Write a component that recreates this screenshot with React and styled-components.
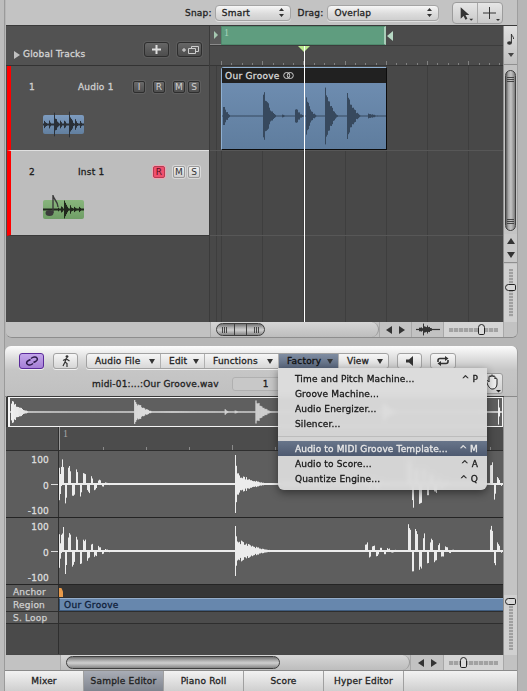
import React from "react";
import styled, { createGlobalStyle } from "styled-components";

const GlobalStyle = createGlobalStyle`
  html, body { margin: 0; padding: 0; background: #b6b6b6; }
  * { box-sizing: border-box; }
  body { font-family: "DejaVu Sans", "Liberation Sans", sans-serif; }
`;

// small seeded random so the waveforms stay the same on every load
const seeded = (seed) => {
  let s = seed;
  return () => {
    s = (s * 16807) % 2147483647;
    return s / 2147483647;
  };
};

// hits: [x, amplitude, decay length, ringing?]
const wavePath = (width, cy, hits, seed, floor = 0.5) => {
  const rnd = seeded(seed);
  let d = "";
  for (let x = 0; x < width; x++) {
    let up = floor;
    let down = floor;
    hits.forEach(([hx, amp, len, ring]) => {
      if (x < hx || x > hx + len) return;
      const t = (x - hx) / len;
      const j = 0.6 + rnd() * 0.4;
      if (ring) {
        const env = amp * Math.pow(1 - t, 1.4);
        const phase = Math.sin((x - hx) * 0.85);
        if (phase > 0.45) up = Math.max(up, env * j);
        if (phase < -0.45) down = Math.max(down, env * j);
      } else {
        const env = amp * Math.pow(1 - t, 2.2);
        up = Math.max(up, env * j);
        down = Math.max(down, env * j);
      }
    });
    d += `M${x + 0.5} ${(cy - up).toFixed(1)}V${(cy + down).toFixed(1)}`;
  }
  return d;
};

const Wave = ({ width, height, hits, seed, color = "#ececec", floor, className }) => (
  <svg className={className} width={width} height={height} viewBox={`0 0 ${width} ${height}`}>
    <path d={wavePath(width, height / 2, hits, seed, floor)} stroke={color} strokeWidth="1" fill="none" />
  </svg>
);

const REGION_HITS = [
  [1, 15, 9], [41, 31, 16], [73, 10, 11], [84, 19, 13], [103, 29, 16], [125, 28, 16],
  [146, 3, 18], [60, 2, 6],
];
const OVERVIEW_HITS = [
  [1, 14, 24], [125, 14, 24], [216, 3, 8], [226, 2, 8], [247, 13, 22], [375, 11, 20], [491, 14, 3],
];
const WAVE_TOP_HITS = [
  [0, 27, 3], [1, 26, 55, true], [176, 29, 6], [176, 13, 44], [305, 8, 40, true], [348, 30, 50, true], [430, 33, 14, true],
];
const WAVE_BOTTOM_HITS = [
  [0, 28, 3], [1, 27, 55, true], [176, 31, 6], [176, 14, 50], [305, 10, 40, true], [348, 32, 52, true], [430, 33, 14, true],
];
const AUDIO_ICON_HITS = [
  [1, 6, 5], [6, 5, 5], [11, 13, 7], [17, 6, 4], [21, 5, 5], [26, 15, 7], [32, 6, 5], [37, 5, 3],
];
const INST_ICON_HITS = [
  [15, 3, 4], [18, 5, 4], [21, 9, 8], [27, 5, 5], [31, 4, 6], [36, 3, 5],
];

const menuItems = [
  { label: "Time and Pitch Machine...", key: "^ P" },
  { label: "Groove Machine..." },
  { label: "Audio Energizer..." },
  { label: "Silencer..." },
  { separator: true },
  { label: "Audio to MIDI Groove Template...", key: "^ M", active: true },
  { label: "Audio to Score...", key: "^ A" },
  { label: "Quantize Engine...", key: "^ Q" },
];

const Screen = styled.div`
  width: 527px;
  height: 691px;
  overflow: hidden;
  background: linear-gradient(90deg, #bdbdbd 0, #bdbdbd 4px, #9a9a9a 4px, #9a9a9a 5px, #b6b6b6 5px);
  padding: 0 9px 0 6px;
  display: flex;
  flex-direction: column;
  gap: 8px;
  filter: blur(0.3px);
  color: #1c1c1c;
  font-size: 9px;
`;

const ArrangePanel = styled.section`
  height: 338px;
  background: #c0c0c0;
  border-bottom: 1px solid #8d8d8d;
  border-right: 1px solid #9e9e9e;
  border-radius: 0 0 6px 6px;
  display: flex;
  flex-direction: column;
  overflow: hidden;
`;

const TopBar = styled.div`
  height: 26px;
  flex: none;
  display: flex;
  align-items: center;
  padding: 0 14px 0 179px;
  font-size: 9px;
  background: #c3c3c3;
  border-bottom: 1px solid #3a3a3a;
`;

const BarLabel = styled.span`
  width: 30px;
  letter-spacing: 0.2px;
  color: #222;
  -webkit-text-stroke: 0.3px #222;
`;

const Select = styled.div`
  width: ${(p) => p.$w}px;
  height: 16px;
  margin-right: ${(p) => p.$mr}px;
  padding: 0 6px;
  display: flex;
  align-items: center;
  justify-content: space-between;
  border: 1px solid #a4a4a4;
  border-radius: 4px;
  font-size: 9px;
  letter-spacing: 0.2px;
  -webkit-text-stroke: 0.3px #222;
  background: linear-gradient(#f6f6f6, #dcdcdc 55%, #cfcfcf);
  box-shadow: 0 1px 0 #e0e0e0;
`;

const UpDown = styled.svg`
  width: 5px;
  height: 9px;
`;

const ToolGroup = styled.div`
  width: 51px;
  height: 22px;
  display: flex;
  border: 1px solid #9c9c9c;
  border-radius: 4px;
  background: linear-gradient(#e6e6e6, #c9c9c9);
  svg:first-child { border-right: 1px solid #a9a9a9; }
`;

const ArrangeBody = styled.div`
  flex: 1;
  min-height: 0;
  display: grid;
  grid-template-columns: 204px 1fr 14px;
`;

const TrackList = styled.div`
  background: #4a4a4a;
  border-right: 1px solid #3b3b3b;
  display: flex;
  flex-direction: column;
`;

const GlobalHeader = styled.div`
  height: 40px;
  flex: none;
  background: #525252;
  border-bottom: 1px solid #333;
  display: flex;
  align-items: flex-end;
  padding: 0 7px 8px 8px;
  color: #d4d4d4;
  font-size: 9px;
  line-height: 13px;
  white-space: nowrap;
  -webkit-text-stroke: 0.3px #d4d4d4;
  letter-spacing: 0.2px;
`;

const GlobalTitle = styled.div`
  display: flex;
  align-items: center;
  gap: 3px;
  margin-bottom: -4px;
`;

const Disclosure = styled.span`
  width: 0;
  height: 0;
  border-left: 6px solid #c0c0c0;
  border-top: 4px solid transparent;
  border-bottom: 4px solid transparent;
`;

const HeaderButton = styled.div`
  width: ${(p) => p.$w}px;
  height: 15px;
  margin-left: ${(p) => p.$ml};
  border: 1px solid #2e2e2e;
  border-radius: 3px;
  background: linear-gradient(#666, #4d4d4d);
  box-shadow: 0 0 0 1px #5c5c5c;
  display: flex;
  align-items: center;
  justify-content: center;
`;

const Track = styled.div`
  height: 85px;
  flex: none;
  padding-top: 13px;
  border-left: 4px solid #ff0000;
  border-bottom: 1px solid ${(p) => (p.$selected ? "#3a3a3a" : "#e0e0e0")};
  margin-left: 1px;
  background: ${(p) => (p.$selected ? "#bdbdbd" : "#525252")};
  color: ${(p) => (p.$selected ? "#1c1c1c" : "#cfcfcf")};
  letter-spacing: 0.2px;
  -webkit-text-stroke: 0.3px ${(p) => (p.$selected ? "#1c1c1c" : "#cfcfcf")};
`;

const TrackRow = styled.div`
  height: 16px;
  display: flex;
  align-items: center;
`;

const TrackNumber = styled.span`
  width: 67px;
  padding-left: 18px;
`;

const TrackName = styled.span`
  width: 55px;
`;

const TrackButtons = styled.div`
  margin-left: ${(p) => p.$ml}px;
  display: flex;
`;

const ToggleButton = styled.div`
  width: 12px;
  height: 12px;
  margin-left: ${(p) => p.$ml || 0}px;
  border-radius: 2px;
  font-size: 9px;
  font-weight: normal;
  letter-spacing: 0;
  -webkit-text-stroke: 0;
  display: flex;
  align-items: center;
  justify-content: center;
  border: 1px solid ${(p) => (p.$on ? "#b83a52" : p.$light ? "#9a9a9a" : "#2e2e2e")};
  background: ${(p) =>
    p.$on ? "#f0506e" : p.$light ? "linear-gradient(#f0f0f0,#cfcfcf)" : "linear-gradient(#6a6a6a,#4f4f4f)"};
  color: ${(p) => (p.$on ? "#5a0f1e" : p.$light ? "#333" : "#cfcfcf")};
  box-shadow: 0 0 0 1px ${(p) => (p.$on ? "#e8a8b4" : p.$light ? "#d8d8d8" : "#5f5f5f")};
`;

const TrackIcon = styled.div`
  position: relative;
  width: 41px;
  height: 19px;
  margin: 20px 0 0 32px;
  border-radius: 2px;
  background: ${(p) => (p.$inst ? "linear-gradient(#88b57c,#6f9e66)" : "linear-gradient(#7d9cc0,#627f9f)")};
  svg { position: absolute; left: 0; top: -8px; }
`;

const NoteGlyph = styled.svg`
  && { left: 2px; top: -6px; }
`;

const TrackSpacer = styled.div`
  flex: 1;
`;

const Timeline = styled.div`
  position: relative;
  background-color: #484848;
  background-image: repeating-linear-gradient(90deg, #3e3e3e 0, #3e3e3e 1px, transparent 1px, transparent 41.2px);
  background-position: 11px 0;
  overflow: hidden;
`;

const Ruler = styled.div`
  height: 40px;
  position: relative;
  background: #4b4b4b;
  border-bottom: 1px solid #363636;
`;

const CycleRow = styled.div`
  height: 20px;
  display: flex;
  border-bottom: 1px solid #3c3c3c;
`;

const CycleToggle = styled.div`
  width: 11px;
  background: #5a5a5a;
  border-bottom: 1px solid #8a8a8a;
  display: flex;
  align-items: center;
  justify-content: center;
  &::after {
    content: "";
    border-left: 4px solid #a5c7b0;
    border-top: 4px solid transparent;
    border-bottom: 4px solid transparent;
  }
`;

const CycleRegion = styled.div`
  width: 165px;
  background: #5f9d7f;
  border: 1px solid #4f8a6d;
  border-right: 2px solid #a9cdb8;
  color: #a9d4bc;
  font-size: 10px;
  padding-left: 2px;
  font-family: "Liberation Serif", serif;
`;

const CycleEnd = styled.div`
  width: 0;
  height: 0;
  margin: 5px 0 0 1px;
  border-right: 6px solid #b7d8c4;
  border-top: 5px solid transparent;
  border-bottom: 5px solid transparent;
`;

const RulerTicks = styled.svg`
  display: block;
`;

const PlayheadMark = styled.div`
  position: absolute;
  left: 88px;
  top: 20px;
  width: 0;
  height: 0;
  border-left: 6px solid transparent;
  border-right: 6px solid transparent;
  border-top: 6px solid #b9e88d;
  z-index: 3;
`;

const Playhead = styled.div`
  position: absolute;
  left: 94px;
  top: 20px;
  bottom: 0;
  width: 1px;
  background: #fff;
  z-index: 3;
`;

const Lane = styled.div`
  height: 85px;
  padding: 1px 0 0 11px;
  border-bottom: 1px solid #575757;
`;

const Region = styled.div`
  width: 166px;
  height: 83px;
  border: 1px solid #0c0c0c;
  border-top-color: #8fb0d2;
  border-left-color: #8fb0d2;
  border-radius: 3px 0 0 0;
  background: linear-gradient(#7190b4, #5f7d9e);
`;

const RegionTitle = styled.div`
  height: 15px;
  padding-left: 3px;
  display: flex;
  align-items: center;
  gap: 3px;
  background: #212121;
  color: #d8d8d8;
  font-size: 9px;
  -webkit-text-stroke: 0.3px #d8d8d8;
  letter-spacing: 0.3px;
`;

const RegionWave = styled(Wave)`
  display: block;
`;

const SideColumn = styled.div`
  background: #c4c4c4;
  border-left: 1px solid #8f8f8f;
  display: flex;
  flex-direction: column;
`;

const NoteButton = styled.div`
  height: 39px;
  flex: none;
  background: linear-gradient(#e0e0e0, #c0c0c0);
  border-bottom: 1px solid #8f8f8f;
  display: flex;
  flex-direction: column;
  align-items: center;
  padding-top: 8px;
  gap: 8px;
`;

const SmallDown = styled.span`
  border-top: 4px solid #444;
  border-left: 3px solid transparent;
  border-right: 3px solid transparent;
`;

const VScrollTrack = styled.div`
  flex: 1;
  padding: 5px 1px 3px;
  display: flex;
`;

const VThumb = styled.div`
  flex: 1;
  border: 1px solid #3f3f3f;
  border-radius: 6px;
  background: linear-gradient(90deg, #5e5e5e, #a8a8a8 28%, #c4c4c4 55%, #7a7a7a);
  display: flex;
  flex-direction: column;
  justify-content: space-between;
  align-items: center;
  padding: 6px 0;
`;

const Grip = styled.div`
  width: 7px;
  height: 5px;
  background: repeating-linear-gradient(#444 0, #444 1px, transparent 1px, transparent 2px);
`;

const ArrowStack = styled.div`
  height: 29px;
  flex: none;
  background: #c8c8c8;
  display: flex;
  flex-direction: column;
  align-items: center;
  justify-content: space-around;
  border-bottom: 1px solid #8f8f8f;
  margin-bottom: 1px;
`;

const Triangle = styled.span`
  width: 0;
  height: 0;
  border: 4px solid transparent;
  ${(p) => p.$dir === "up" && "border-bottom: 6px solid #333; border-top: 0;"}
  ${(p) => p.$dir === "down" && "border-top: 6px solid #333; border-bottom: 0;"}
  ${(p) => p.$dir === "left" && "border-right: 6px solid #333; border-left: 0;"}
  ${(p) => p.$dir === "right" && "border-left: 6px solid #333; border-right: 0;"}
`;

const VZoom = styled.div`
  position: relative;
  height: ${(p) => p.$h}px;
  flex: none;
  background: #d0d0d0;
  display: flex;
  justify-content: center;
  padding: 5px 0;
  &::before {
    content: "";
    width: 4px;
    background: repeating-linear-gradient(#a0a0a0 0, #a0a0a0 2px, #c8c8c8 2px, #c8c8c8 3px);
  }
`;

const VKnob = styled.div`
  position: absolute;
  left: 1px;
  top: ${(p) => p.$top}px;
  width: 11px;
  height: 7px;
  border: 1px solid #222;
  border-radius: 4px 2px 2px 4px;
  background: #d8d8d8;
`;

const ScrollFooter = styled.div`
  height: ${(p) => p.$h}px;
  flex: none;
  display: grid;
  grid-template-columns: ${(p) => p.$columns};
  background: #c2c2c2;
`;

const FooterCell = styled.div`
  border-left: 1px solid #a8a8a8;
  display: flex;
  align-items: center;
  justify-content: center;
  gap: 7px;
`;

const HScroll = styled.div`
  padding: 1px 0 1px 5px;
  display: flex;
  background: linear-gradient(#d6d6d6, #bdbdbd);
  border-radius: 0 8px 8px 0;
  border-left: 1px solid #a8a8a8;
  border-right: 1px solid #999;
`;

const HThumb = styled.div`
  width: ${(p) => p.$w}px;
  border: 1px solid #3f3f3f;
  border-radius: 7px;
  background: linear-gradient(#6f6f6f, #b5b5b5 35%, #cfcfcf 55%, #858585);
  display: flex;
  justify-content: space-between;
  align-items: center;
  padding: 0 5px;
  span {
    width: 5px;
    height: 6px;
    background: repeating-linear-gradient(90deg, #444 0, #444 1px, transparent 1px, transparent 2px);
  }
`;

const ThumbMiddle = styled.div`
  width: 13px;
  align-self: stretch;
  border-left: 1px solid #3f3f3f;
  border-right: 1px solid #3f3f3f;
`;

const HZoom = styled.div`
  position: relative;
  background: #d4d4d4;
  border-left: 1px solid #a8a8a8;
  display: flex;
  align-items: center;
  padding: 0 5px;
  &::before {
    content: "";
    flex: 1;
    height: 4px;
    background: repeating-linear-gradient(90deg, #a2a2a2 0, #a2a2a2 4px, #c8c8c8 4px, #c8c8c8 5px);
  }
`;

const HKnob = styled.div`
  position: absolute;
  left: ${(p) => p.$left}px;
  top: 2px;
  width: 7px;
  height: 11px;
  border: 1px solid #222;
  border-radius: 4px 4px 2px 2px;
  background: #dcdcdc;
`;

const EditorPanel = styled.section`
  position: relative;
  flex: 1;
  margin-left: -1px;
  display: flex;
  flex-direction: column;
  background: #c0c0c0;
  border-right: 1px solid #9e9e9e;
  border-radius: 6px 6px 0 0;
  overflow: hidden;
`;

const EditorBar = styled.div`
  height: 51px;
  flex: none;
  background: linear-gradient(#fcfcfc 0, #dadada 14px, #c6c6c6 24px, #c0c0c0);
  border-bottom: 1px solid #8a8a8a;
`;

const ButtonRow = styled.div`
  height: 16px;
  margin-top: 7px;
  display: flex;
  align-items: stretch;
`;

const IconButton = styled.div`
  width: ${(p) => p.$w}px;
  margin-left: ${(p) => p.$ml}px;
  border: 1px solid ${(p) => (p.$on ? "#5a2a9a" : "#a2a2a2")};
  border-radius: 3px;
  background: ${(p) => (p.$on ? "linear-gradient(#c3a6ea,#a57fd6)" : "linear-gradient(#f6f6f6,#d6d6d6)")};
  box-shadow: 0 1px 0 #f0f0f0;
  display: flex;
  align-items: center;
  justify-content: center;
`;

const MenuGroup = styled.div`
  margin-left: 8px;
  width: 303px;
  display: flex;
  border: 1px solid #a2a2a2;
  border-radius: 3px;
  background: linear-gradient(#f6f6f6, #d8d8d8);
  box-shadow: 0 1px 0 #f0f0f0;
`;

const MenuButton = styled.div`
  width: ${(p) => p.$w}px;
  padding: 0 5px 0 8px;
  display: flex;
  align-items: center;
  justify-content: space-between;
  border-right: 1px solid #b0b0b0;
  font-size: 9px;
  -webkit-text-stroke: 0.3px currentColor;
  letter-spacing: 0.2px;
  background: ${(p) => (p.$open ? "linear-gradient(#7f8da2,#59667c)" : "none")};
  color: ${(p) => (p.$open ? "#101010" : "#222")};
  &:last-child { border-right: 0; }
  &::after {
    content: "";
    border-top: 5px solid #333;
    border-left: 3px solid transparent;
    border-right: 3px solid transparent;
  }
`;

const FileRow = styled.div`
  height: 14px;
  margin-top: 8px;
  display: flex;
  align-items: center;
  padding-left: 87px;
  font-size: 9px;
  letter-spacing: 0.2px;
  -webkit-text-stroke: 0.3px #222;
`;

const FileField = styled.div`
  width: 60px;
  height: 14px;
  margin-left: 13px;
  border: 1px solid #b0b0b0;
  border-radius: 3px;
  background: #c8c8c8;
  display: flex;
  align-items: center;
  justify-content: flex-end;
  padding-right: 22px;
`;

const HandButton = styled.div`
  position: absolute;
  right: 14px;
  top: 27px;
  width: 22px;
  height: 21px;
  border: 1px solid #9c9c9c;
  border-radius: 3px;
  background: linear-gradient(#e8e8e8, #cfcfcf);
  display: flex;
  align-items: center;
  justify-content: flex-end;
`;

const EditorBody = styled.div`
  flex: 1;
  min-height: 0;
  margin-left: 1px;
  display: grid;
  grid-template-columns: 1fr 14px;
  background: #4a4a4a;
`;

const EditorMain = styled.div`
  display: flex;
  flex-direction: column;
  min-width: 0;
`;

const Overview = styled.div`
  height: 30px;
  flex: none;
  background: #5f5f5f;
  border: 1px solid #f4f4f4;
  border-left-width: 2px;
  margin-left: 2px;
  box-shadow: -2px 0 0 #3a3a3a, 0 0 0 1px #3a3a3a;
  display: flex;
  align-items: center;
`;

const LabeledRow = styled.div`
  height: ${(p) => p.$h}px;
  flex: none;
  display: grid;
  grid-template-columns: 53px 1fr;
  border-bottom: 1px solid ${(p) => p.$line || "#2e2e2e"};
  background: ${(p) => p.$bg || "#4c4c4c"};
`;

const RowLabel = styled.div`
  background: ${(p) => p.$bg || "#4f4f4f"};
  border-right: 1px solid #2e2e2e;
  color: #d0d0d0;
  font-size: 9px;
  -webkit-text-stroke: 0.25px #d0d0d0;
  letter-spacing: 0.2px;
  padding: 1px 0 0 7px;
  display: flex;
  align-items: center;
`;

const Scale = styled.div`
  position: relative;
  background: #5d5d5d;
  border-right: 1px solid #2e2e2e;
  display: flex;
  flex-direction: column;
  justify-content: space-between;
  align-items: flex-end;
  padding: 4px 9px 0 0;
  color: #dcdcdc;
  font-size: 9px;
  line-height: 11px;
  letter-spacing: 0.2px;
  -webkit-text-stroke: 0.3px #dcdcdc;
  &::after {
    content: "";
    position: absolute;
    right: 0;
    top: 50%;
    width: 7px;
    height: 1px;
    background: #ddd;
  }
`;

const WaveCell = styled.div`
  background: #5e5e5e;
  overflow: hidden;
  svg { display: block; }
`;

const RulerCell = styled.div`
  position: relative;
  color: #a8a8a8;
  font-size: 10px;
  font-family: "Liberation Serif", serif;
  padding: 1px 0 0 3px;
  border-left: 1px solid #9a9a9a;
  svg { position: absolute; left: 0; bottom: 0; }
`;

const AnchorMark = styled.div`
  width: 4px;
  height: 9px;
  margin-top: 3px;
  background: #e89a4a;
  clip-path: polygon(0 0, 60% 0, 100% 40%, 100% 100%, 0 100%);
`;

const RegionBar = styled.div`
  background: #6787ad;
  border-top: 1px solid #95aecb;
  border-bottom: 1px solid #3f5c7e;
  border-left: 1px solid #34506f;
  color: #10213a;
  font-size: 9px;
  -webkit-text-stroke: 0.3px #10213a;
  letter-spacing: 0.3px;
  padding: 1px 0 0 4px;
  display: flex;
  align-items: center;
`;

const Tabs = styled.div`
  height: 21px;
  flex: none;
  display: flex;
  border-top: 1px solid #8a8a8a;
  background: linear-gradient(#f2f2f2, #cfcfcf);
`;

const Tab = styled.div`
  width: ${(p) => p.$w}px;
  display: flex;
  align-items: center;
  justify-content: center;
  border-right: 1px solid #a0a0a0;
  font-size: 9px;
  -webkit-text-stroke: 0.3px #222;
  letter-spacing: 0.2px;
  background: ${(p) => (p.$active ? "linear-gradient(#a9adb6,#80858f)" : "none")};
`;

const FactoryMenu = styled.div`
  position: absolute;
  left: 273px;
  top: 22px;
  width: 209px;
  height: 122px;
  padding: 3px 0;
  border-radius: 0 0 6px 6px;
  background: rgba(222, 222, 222, 0.93);
  backdrop-filter: blur(2px);
  box-shadow: 0 3px 9px rgba(0, 0, 0, 0.45);
  z-index: 5;
`;

const MenuItem = styled.div`
  height: 15px;
  padding: 0 9px 0 17px;
  display: flex;
  align-items: center;
  justify-content: space-between;
  font-size: 9px;
  letter-spacing: 0.15px;
  color: ${(p) => (p.$active ? "#e8e8e8" : "#181818")};
  -webkit-text-stroke: 0.3px currentColor;
  background: ${(p) => (p.$active ? "linear-gradient(#68758a,#4e5a70)" : "none")};
`;

const MenuSeparator = styled.div`
  height: 10px;
  display: flex;
  align-items: center;
  &::after { content: ""; flex: 1; height: 1px; background: #bcbcbc; }
`;

const UpDownArrows = () => (
  <UpDown viewBox="0 0 5 9">
    <path d="M2.500 0 5 3H0zM2.500 9 0 6h5z" fill="#333" />
  </UpDown>
);

const ArrowTool = () => (
  <svg width="25" height="20" viewBox="0 0 25 20">
    <path d="M8 4v12l3-3 2 4 2-1-2-4h4z" fill="#333" />
    <path d="M17 16h4l-2 2z" fill="#333" />
  </svg>
);

const CrossTool = () => (
  <svg width="24" height="20" viewBox="0 0 24 20">
    <path d="M11.500 4v12M5 10h13" stroke="#333" strokeWidth="1" fill="none" />
    <path d="M18 16h4l-2 2z" fill="#333" />
  </svg>
);

const NoteIcon = () => (
  <svg width="7" height="11" viewBox="0 0 7 11">
    <ellipse cx="2.500" cy="9" rx="2.400" ry="1.800" fill="#333" />
    <path d="M4.400 9V0c.2 2 2.400 2.500 2.200 5" stroke="#333" strokeWidth="1" fill="none" />
  </svg>
);

const LinkIcon = () => (
  <svg width="14" height="10" viewBox="0 0 14 10">
    <path d="M6 2.500 7.500 1.500c1.500-1 4-.6 4.600.7s-.2 2.600-1.600 3.300L8.500 6.500M8 7.500 6.500 8.500c-1.500 1-4 .6-4.600-.7S2.100 5.200 3.500 4.500L5.500 3.500" stroke="#2c1a4a" strokeWidth="1.500" fill="none" />
  </svg>
);

const RunnerIcon = () => (
  <svg width="10" height="12" viewBox="0 0 10 12">
    <circle cx="6" cy="1.600" r="1.400" fill="#333" />
    <path d="M5.500 3 4 7l2 1.500V12M4 7 2 11M5.500 4 8.500 6M5 4 2 5.500" stroke="#333" strokeWidth="1.200" fill="none" />
  </svg>
);

const SpeakerIcon = () => (
  <svg width="10" height="10" viewBox="0 0 10 10">
    <path d="M1 3.500h3L8 0v10L4 6.500H1z" fill="#333" />
  </svg>
);

const LoopIcon = () => (
  <svg width="14" height="10" viewBox="0 0 14 10">
    <path d="M2 6V4.500C2 3.400 2.900 2.500 4 2.500h6M12 4v1.500c0 1.100-.9 2-2 2H4" stroke="#333" strokeWidth="1.600" fill="none" />
    <path d="M9 0l3.500 2.500L9 5zM5 5 1.500 7.500 5 10z" fill="#333" />
  </svg>
);

const HeaderTicks = ({ width }) => {
  let d = "";
  for (let i = 0; i * 10.3 < width; i++) {
    const major = i % 4 === 0;
    const x = Math.round(i * 10.3) + 11.5;
    d += `M${x} 19V${major ? 15 : 17}`;
  }
  return (
    <RulerTicks width={width} height="19" viewBox={`0 0 ${width} 19`}>
      <path d={d} stroke="#808080" fill="none" />
    </RulerTicks>
  );
};

const App = () => (
  <>
    <GlobalStyle />
    <Screen>
      <ArrangePanel>
        <TopBar>
          <BarLabel>Snap:</BarLabel>
          <Select $w={76} $mr={7}>Smart<UpDownArrows /></Select>
          <BarLabel>Drag:</BarLabel>
          <Select $w={112} $mr={13}>Overlap<UpDownArrows /></Select>
          <ToolGroup>
            <ArrowTool />
            <CrossTool />
          </ToolGroup>
        </TopBar>

        <ArrangeBody>
          <TrackList>
            <GlobalHeader>
              <GlobalTitle><Disclosure />Global Tracks</GlobalTitle>
              <HeaderButton $w={25} $ml="auto">
                <svg width="9" height="9" viewBox="0 0 9 9"><path d="M4.500 0v9M0 4.500h9" stroke="#ddd" strokeWidth="2" /></svg>
              </HeaderButton>
              <HeaderButton $w={25} $ml="8px">
                <svg width="18" height="10" viewBox="0 0 18 10">
                  <path d="M3 3v4M1 5h4" stroke="#ddd" strokeWidth="1" />
                  <path d="M7.500 3.500h7v5h-7zM10.500 3V1.500h7v5H15" stroke="#ccc" fill="none" />
                </svg>
              </HeaderButton>
            </GlobalHeader>
            <Track>
              <TrackRow>
                <TrackNumber>1</TrackNumber>
                <TrackName>Audio 1</TrackName>
                <TrackButtons $ml={0}>
                  <ToggleButton>I</ToggleButton>
                  <ToggleButton $ml={8}>R</ToggleButton>
                  <ToggleButton $ml={8}>M</ToggleButton>
                  <ToggleButton $ml={3}>S</ToggleButton>
                </TrackButtons>
              </TrackRow>
              <TrackIcon>
                <Wave width={41} height={35} seed={31} color="#2a3038" floor={1} hits={AUDIO_ICON_HITS} />
              </TrackIcon>
            </Track>
            <Track $selected>
              <TrackRow>
                <TrackNumber>2</TrackNumber>
                <TrackName>Inst 1</TrackName>
                <TrackButtons $ml={20}>
                  <ToggleButton $on>R</ToggleButton>
                  <ToggleButton $light $ml={8}>M</ToggleButton>
                  <ToggleButton $light $ml={3}>S</ToggleButton>
                </TrackButtons>
              </TrackRow>
              <TrackIcon $inst>
                <Wave width={41} height={35} seed={77} color="#20281c" floor={1} hits={INST_ICON_HITS} />
                <NoteGlyph width="16" height="24" viewBox="0 0 16 24">
                  <ellipse cx="4.500" cy="19" rx="4" ry="3" fill="#3b3b3b" />
                  <path d="M8 19V1c.5 5 5 6 5 12" stroke="#3b3b3b" strokeWidth="1.400" fill="none" />
                </NoteGlyph>
              </TrackIcon>
            </Track>
            <TrackSpacer />
          </TrackList>

          <Timeline>
            <Ruler>
              <CycleRow>
                <CycleToggle />
                <CycleRegion>1</CycleRegion>
                <CycleEnd />
              </CycleRow>
              <HeaderTicks width={293} />
            </Ruler>
            <PlayheadMark />
            <Playhead />
            <Lane>
              <Region>
                <RegionTitle>
                  Our Groove
                  <svg width="11" height="7" viewBox="0 0 11 7">
                    <circle cx="3.700" cy="3.500" r="3" stroke="#d0d0d0" fill="none" />
                    <circle cx="7.300" cy="3.500" r="3" stroke="#d0d0d0" fill="none" />
                  </svg>
                </RegionTitle>
                <RegionWave width={164} height={66} seed={11} color="#37495e" hits={REGION_HITS} />
              </Region>
            </Lane>
            <Lane />
          </Timeline>

          <SideColumn>
            <NoteButton><NoteIcon /><SmallDown /></NoteButton>
            <VScrollTrack>
              <VThumb><Grip /><Grip /></VThumb>
            </VScrollTrack>
            <ArrowStack>
              <Triangle $dir="up" />
              <Triangle $dir="down" />
            </ArrowStack>
            <VZoom $h={58}><VKnob $top={20} /></VZoom>
          </SideColumn>
        </ArrangeBody>

        <ScrollFooter $h={15} $columns="204px 1fr 32px 32px 60px 14px">
          <div />
          <HScroll>
            <HThumb $w={49}><span /><ThumbMiddle /><span /></HThumb>
          </HScroll>
          <FooterCell><Triangle $dir="left" /><Triangle $dir="right" /></FooterCell>
          <FooterCell>
            <Wave width={24} height={13} seed={9} color="#333" floor={0.6} hits={[[3, 3, 18], [7, 6, 10], [11, 5, 9]]} />
          </FooterCell>
          <HZoom><HKnob $left={34} /></HZoom>
          <FooterCell />
        </ScrollFooter>
      </ArrangePanel>

      <EditorPanel>
        <EditorBar>
          <ButtonRow>
            <IconButton $w={25} $ml={14} $on><LinkIcon /></IconButton>
            <IconButton $w={25} $ml={9}><RunnerIcon /></IconButton>
            <MenuGroup>
              <MenuButton $w={74}>Audio File</MenuButton>
              <MenuButton $w={44}>Edit</MenuButton>
              <MenuButton $w={74}>Functions</MenuButton>
              <MenuButton $w={60} $open>Factory</MenuButton>
              <MenuButton $w={49}>View</MenuButton>
            </MenuGroup>
            <IconButton $w={25} $ml={8}><SpeakerIcon /></IconButton>
            <IconButton $w={26} $ml={8}><LoopIcon /></IconButton>
          </ButtonRow>
          <FileRow>
            midi-01:...:Our Groove.wav
            <FileField>1</FileField>
          </FileRow>
          <HandButton>
            <svg width="16" height="19" viewBox="0 0 16 19">
              <path d="M1 9C0 6 2 6 3 8V3c0-1.500 2-1.500 2 0V2c0-1.500 2-1.500 2 0v1c0-1.500 2-1.500 2 0v2c0-1.500 2-1 2 0v5c0 3-2 5-4 5H6C4 15 2 12 1 9z" fill="#eee" stroke="#222" />
              <path d="M10 16h5l-2.500 2.500z" fill="#222" />
            </svg>
          </HandButton>
        </EditorBar>

        <EditorBody>
          <EditorMain>
            <Overview>
              <Wave width={495} height={28} seed={5} floor={0.7} color="#f2f2f2" hits={OVERVIEW_HITS} />
            </Overview>
            <LabeledRow $h={24}>
              <RowLabel />
              <RulerCell>
                1
                <svg width="444" height="5" viewBox="0 0 444 5">
                  <path d="M43.500 5V2M86.500 5V2M129.500 5V2M172.500 5V0M215.500 5V2M258.500 5V2M301.500 5V2M344.500 5V0M387.500 5V2M430.500 5V2" stroke="#8a8a8a" />
                </svg>
              </RulerCell>
            </LabeledRow>
            <LabeledRow $h={67} $line="#242424">
              <Scale><span>100</span><span>0</span><span>-100</span></Scale>
              <WaveCell><Wave width={444} height={66} seed={21} floor={1} hits={WAVE_TOP_HITS} /></WaveCell>
            </LabeledRow>
            <LabeledRow $h={67} $line="#242424">
              <Scale><span>100</span><span>0</span><span>-100</span></Scale>
              <WaveCell><Wave width={444} height={66} seed={47} floor={1} hits={WAVE_BOTTOM_HITS} /></WaveCell>
            </LabeledRow>
            <LabeledRow $h={13} $bg="#363636">
              <RowLabel $bg="#5a5a5a">Anchor</RowLabel>
              <AnchorMark />
            </LabeledRow>
            <LabeledRow $h={14} $bg="#6787ad">
              <RowLabel $bg="#5a5a5a">Region</RowLabel>
              <RegionBar>Our Groove</RegionBar>
            </LabeledRow>
            <LabeledRow $h={12} $bg="#4c4c4c">
              <RowLabel $bg="#5a5a5a">S. Loop</RowLabel>
              <div />
            </LabeledRow>
            <LabeledRow $h={31} $line="#484848" $bg="#484848">
              <RowLabel $bg="#4a4a4a" />
              <div />
            </LabeledRow>
          </EditorMain>
          <SideColumn>
            <TrackSpacer />
            <VZoom $h={60}><VKnob $top={3} /></VZoom>
          </SideColumn>
        </EditorBody>

        <ScrollFooter $h={15} $columns="55px 1fr 33px 60px 14px">
          <div />
          <HScroll>
            <HThumb $w={214} />
          </HScroll>
          <FooterCell><Triangle $dir="left" /><Triangle $dir="right" /></FooterCell>
          <HZoom><HKnob $left={16} /></HZoom>
          <FooterCell />
        </ScrollFooter>

        <Tabs>
          <Tab $w={79}>Mixer</Tab>
          <Tab $w={80} $active>Sample Editor</Tab>
          <Tab $w={80}>Piano Roll</Tab>
          <Tab $w={80}>Score</Tab>
          <Tab $w={80}>Hyper Editor</Tab>
        </Tabs>

        <FactoryMenu>
          {menuItems.map((item, i) =>
            item.separator ? (
              <MenuSeparator key={i} />
            ) : (
              <MenuItem key={i} $active={item.active}>
                <span>{item.label}</span>
                {item.key && <span>{item.key}</span>}
              </MenuItem>
            )
          )}
        </FactoryMenu>
      </EditorPanel>
    </Screen>
  </>
);

export default App;
